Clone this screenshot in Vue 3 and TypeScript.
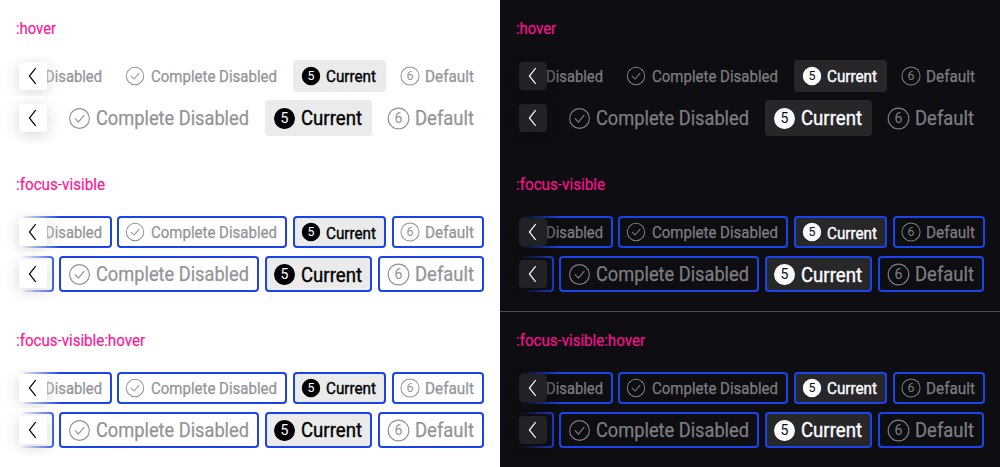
<script setup lang="ts">
interface Item {
  kind: 'plain' | 'check' | 'current' | 'number'
  label: string
  digit?: string
  width: number
  textWidth: number
}
interface Row {
  size: 'small' | 'medium'
  items: Item[]
}

const themes = ['light', 'dark'] as const
const states = [
  { label: ':hover', width: 40, focus: false },
  { label: ':focus-visible', width: 89, focus: true },
  { label: ':focus-visible:hover', width: 129, focus: true },
]
const rows: Row[] = [
  {
    size: 'small',
    items: [
      { kind: 'plain', label: 'Disabled', width: 150, textWidth: 57 },
      { kind: 'check', label: 'Complete Disabled', width: 169.3, textWidth: 126 },
      { kind: 'current', label: 'Current', digit: '5', width: 93.5, textWidth: 50 },
      { kind: 'number', label: 'Default', digit: '6', width: 92, textWidth: 49 },
    ],
  },
  {
    size: 'medium',
    items: [
      { kind: 'plain', label: '', width: 100, textWidth: 1 },
      { kind: 'check', label: 'Complete Disabled', width: 199.6, textWidth: 153 },
      { kind: 'current', label: 'Current', digit: '5', width: 107.8, textWidth: 61 },
      { kind: 'number', label: 'Default', digit: '6', width: 106, textWidth: 59 },
    ],
  },
]
</script>

<template>
  <main class="page">
    <div v-for="theme in themes" :key="theme" class="panel" :class="theme">
      <section v-for="state in states" :key="state.label" class="state" :class="{ focus: state.focus }">
        <svg class="title" width="200" height="24">
          <text x="0" y="18" :textLength="state.width" lengthAdjust="spacingAndGlyphs">{{ state.label }}</text>
        </svg>
        <div v-for="row in rows" :key="row.size" class="row" :class="row.size">
          <div class="track">
            <div
              v-for="(item, i) in row.items"
              :key="i"
              class="item"
              :class="item.kind"
              :style="{ width: item.width + 'px' }"
            >
              <svg v-if="item.kind !== 'plain'" class="icon" viewBox="0 0 24 24">
                <circle class="ring" cx="12" cy="12" :r="item.kind === 'number' ? 9.9 : 9.5" />
                <path v-if="item.kind === 'check'" class="tick" d="M7.6 11.9l3.3 3.5 5.7-6.6" />
                <text v-else class="digit" x="12" y="16.6" text-anchor="middle">{{ item.digit }}</text>
              </svg>
              <svg v-if="item.label" class="label" :width="item.textWidth" height="28">
                <text x="0" :y="row.size === 'small' ? 20 : 21" :textLength="item.textWidth" lengthAdjust="spacingAndGlyphs">{{ item.label }}</text>
              </svg>
            </div>
          </div>
          <div class="fade"></div>
          <button class="prev" type="button" aria-label="previous">
            <svg width="28" height="28" viewBox="0 0 28 28">
              <path d="M16.7 6.2L10.4 14l6.3 7.8" />
            </svg>
          </button>
        </div>
      </section>
    </div>
  </main>
</template>

<style>
body {
  margin: 0;
}
</style>

<style scoped>
.page {
  display: grid;
  grid-template-columns: 500px 500px;
  width: 1000px;
  height: 467px;
  overflow: hidden;
  font-family: Roboto, 'Liberation Sans', sans-serif;
}
.panel {
  --bg: #fff;
  --clear: rgba(255, 255, 255, 0);
  --muted: #939498;
  --ink: #010205;
  --surface: #ebebeb;
  --button: #fff;
  --invert: #fff;
  background: var(--bg);
  height: 467px;
  overflow: hidden;
}
.dark {
  --bg: #0e0e12;
  --clear: rgba(14, 14, 18, 0);
  --muted: #7d7d80;
  --ink: #fbfcff;
  --surface: #272729;
  --button: #212225;
  --invert: #0e0e12;
}
.state {
  box-sizing: border-box;
  height: 156px;
  padding: 16px 16px 0;
}
.dark .state:nth-child(3) {
  box-shadow: 0 -1px 0 #4c4c50;
}
.title {
  display: block;
  margin-bottom: 16px;
  fill: #ff1093;
  stroke: #ff1093;
  stroke-width: 0.15;
  font-size: 16px;
}
.row {
  position: relative;
  height: 40px;
  overflow: hidden;
  margin: 0 -16px;
  padding: 0 16px;
}
.row.medium {
  height: 48px;
}
.track {
  display: flex;
  justify-content: flex-end;
  gap: 5.6px;
  padding-top: 4px;
  overflow: hidden;
}
.small .track {
  gap: 5.9px;
}
.dark .small .track {
  margin-right: -1px;
}
.item {
  box-sizing: border-box;
  display: flex;
  flex: none;
  align-items: center;
  height: 32px;
  padding: 0 10px 0 7px;
  border-radius: 4px;
  color: var(--muted);
}
.small .item.number {
  padding-left: 6.5px;
}
.medium .item {
  height: 36px;
  padding: 0 10px 0 7.5px;
}
.item.plain {
  justify-content: flex-end;
}
.item.current {
  color: var(--ink);
  background: var(--surface);
}
.focus .item {
  box-shadow: inset 0 0 0 2px #1a44ea;
}
.icon {
  flex: none;
  width: 22px;
  height: 22px;
  fill: none;
  stroke: currentColor;
  stroke-width: 1.1;
}
.medium .icon {
  width: 25px;
  height: 25px;
}
.label {
  flex: none;
  display: block;
  margin-left: auto;
  overflow: visible;
  fill: currentColor;
  stroke: currentColor;
  stroke-width: 0.25;
  font-size: 16px;
}
.medium .label {
  font-size: 20px;
}
.current .label {
  stroke-width: 0.4;
}
.focus:nth-child(2) .current .label {
  margin-top: 2px;
}
.digit {
  fill: currentColor;
  stroke: none;
  font-size: 13.5px;
}
.current .ring {
  fill: currentColor;
}
.current .digit {
  fill: var(--invert);
}
.fade {
  position: absolute;
  left: 16px;
  top: 0;
  width: 44px;
  height: 100%;
  background: linear-gradient(to right, var(--bg) 12%, var(--clear));
}
.prev {
  position: absolute;
  left: 19px;
  top: 6px;
  width: 28px;
  height: 28px;
  padding: 0;
  border: 0;
  border-radius: 4px;
  background: var(--button);
  box-shadow: 0 3px 16px rgba(0, 0, 0, 0.16);
}
.medium .prev {
  top: 8px;
}
.prev svg {
  display: block;
  fill: none;
  stroke: var(--ink);
  stroke-width: 1.2;
}
</style>
